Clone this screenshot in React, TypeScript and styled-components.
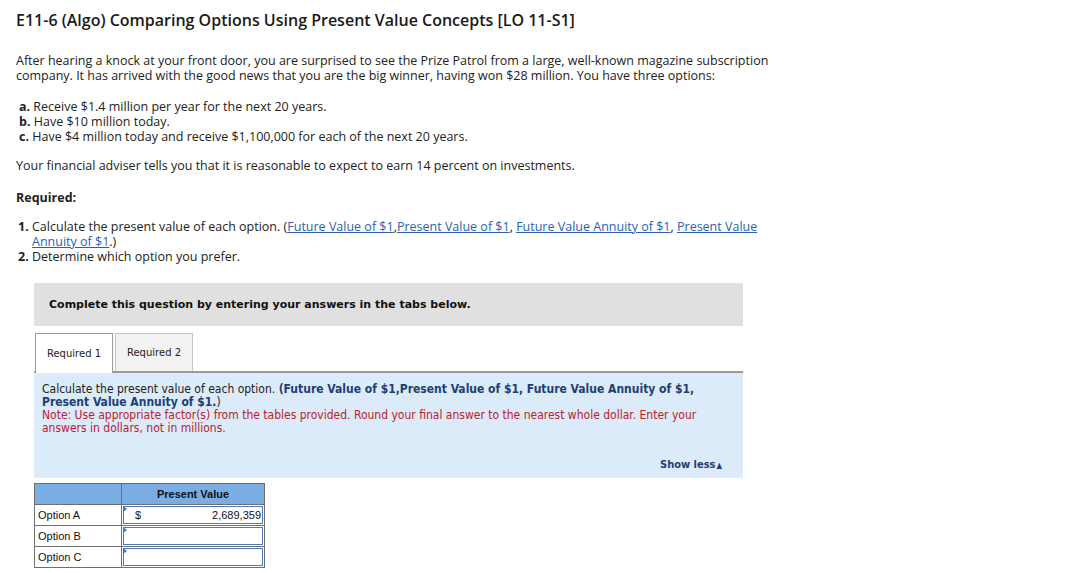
import React from 'react';
import styled, { createGlobalStyle } from 'styled-components';

const GlobalStyle = createGlobalStyle`
  body {
    margin: 0;
    background: #fff;
    color: #222;
    font-family: "Open Sans", "Liberation Sans", sans-serif;
  }
`;

const Page = styled.div`
  width: 1092px;
  padding: 10px 16px 0 16px;
  box-sizing: border-box;
`;

const Title = styled.h1`
  margin: 0;
  font-size: 16px;
  font-weight: 600;
  line-height: 20px;
  color: #1a1a1a;
`;

const Para = styled.p<{ $top?: number }>`
  margin: ${(p) => p.$top ?? 0}px 0 0 0;
  font-size: 12.5px;
  line-height: 14.5px;
  width: 755px;
`;

const OptionList = styled.ul`
  list-style: none;
  margin: 16px 0 0 0;
  padding: 0 0 0 3px;
  font-size: 12.5px;
  line-height: 15px;
`;

const Marker = styled.b`
  font-weight: 700;
`;

const Heading = styled.div`
  margin-top: 15px;
  font-size: 12.5px;
  font-weight: 700;
`;

const Numbered = styled.ol`
  margin: 13px 0 0 0;
  padding: 0 0 0 16px;
  font-size: 12.5px;
  line-height: 15px;
  width: 740px;
  li::marker {
    font-weight: 700;
  }
`;

const Item = styled.li`
  padding-left: 0;
`;

const Link = styled.a`
  color: #2a62b0;
  text-decoration: underline;
`;

const Question = styled.div`
  margin: 19px 0 0 18px;
  width: 709px;
`;

const Banner = styled.div`
  background: #e0e0e0;
  height: 43px;
  display: flex;
  align-items: center;
  padding-left: 15px;
  font-family: "DejaVu Sans", Verdana, sans-serif;
  font-size: 11px;
  font-weight: 700;
  color: #111;
`;

const TabBar = styled.div`
  margin-top: 7px;
  display: flex;
  gap: 2px;
  padding-left: 1px;
  border-bottom: 2px solid #9a9a9a;
  height: 38px;
`;

const Tab = styled.div<{ $active?: boolean }>`
  width: 78px;
  box-sizing: border-box;
  border: 1px solid ${(p) => (p.$active ? '#9a9a9a' : '#c4c4c4')};
  border-bottom: none;
  background: ${(p) => (p.$active ? '#fff' : '#f2f2f2')};
  height: ${(p) => (p.$active ? 40 : 38)}px;
  display: flex;
  align-items: center;
  justify-content: center;
  font-family: "DejaVu Sans", Verdana, sans-serif;
  font-size: 10px;
  color: #222;
`;

const Panel = styled.div`
  background: #dbebf9;
  padding: 10px 8px 6px 8px;
  font-family: "DejaVu Sans Condensed", "DejaVu Sans", sans-serif;
  font-size: 12px;
  line-height: 13px;
  color: #222;
`;

const Strong = styled.b`
  color: #1f3e74;
`;

const Note = styled.div`
  color: #c0202a;
`;

const ShowLess = styled.div`
  margin-top: 23px;
  text-align: right;
  padding-right: 13px;
  font-weight: 700;
  font-size: 11px;
  color: #1f3e74;
`;

const Arrow = styled.span`
  font-size: 8px;
  margin-left: 1px;
`;

const Table = styled.table`
  margin-top: 5px;
  border-collapse: collapse;
  font-family: "Liberation Sans", Arial, sans-serif;
  font-size: 11px;
  color: #111;
`;

const HeadCell = styled.th<{ $w: number }>`
  width: ${(p) => p.$w}px;
  height: 20px;
  background: #7aaee3;
  border: 1px solid #6f6f6f;
  font-weight: 700;
  padding: 0;
  text-align: center;
`;

const LabelCell = styled.td`
  height: 20px;
  border: 1px solid #6f6f6f;
  padding: 0 3px;
`;

const ValueCell = styled.td`
  border: 1px solid #6f6f6f;
  padding: 1px;
  height: 18px;
  position: relative;
`;

const Input = styled.div`
  box-sizing: border-box;
  height: 18px;
  border: 1px solid #4d79b4;
  display: flex;
  justify-content: space-between;
  align-items: center;
  padding: 0 1px 0 11px;
`;

const Flag = styled.span`
  position: absolute;
  top: 1px;
  left: 1px;
  width: 0;
  height: 0;
  border-top: 3px solid transparent;
  border-bottom: 3px solid transparent;
  border-left: 4px solid #3b78c8;
`;

const rows = [
  { label: 'Option A', value: '2,689,359' },
  { label: 'Option B', value: '' },
  { label: 'Option C', value: '' },
];

export default function App() {
  return (
    <Page>
      <GlobalStyle />
      <Title>E11-6 (Algo) Comparing Options Using Present Value Concepts [LO 11-S1]</Title>
      <Para $top={24}>
        After hearing a knock at your front door, you are surprised to see the Prize Patrol from a large, well-known magazine subscription company. It has arrived with the good news that you are the big winner, having won $28 million. You have three options:
      </Para>
      <OptionList>
        <li><Marker>a.</Marker> Receive $1.4 million per year for the next 20 years.</li>
        <li><Marker>b.</Marker> Have $10 million today.</li>
        <li><Marker>c.</Marker> Have $4 million today and receive $1,100,000 for each of the next 20 years.</li>
      </OptionList>
      <Para $top={15}>Your financial adviser tells you that it is reasonable to expect to earn 14 percent on investments.</Para>
      <Heading>Required:</Heading>
      <Numbered>
        <Item>
          Calculate the present value of each option. (<Link>Future Value of $1</Link>,<Link>Present Value of $1</Link>, <Link>Future Value Annuity of $1</Link>, <Link>Present Value Annuity of $1</Link>.)
        </Item>
        <Item>Determine which option you prefer.</Item>
      </Numbered>
      <Question>
        <Banner>Complete this question by entering your answers in the tabs below.</Banner>
        <TabBar>
          <Tab $active>Required 1</Tab>
          <Tab>Required 2</Tab>
        </TabBar>
        <Panel>
          Calculate the present value of each option. <Strong>(Future Value of $1,Present Value of $1, Future Value Annuity of $1, Present Value Annuity of $1.</Strong>)
          <Note>Note: Use appropriate factor(s) from the tables provided. Round your final answer to the nearest whole dollar. Enter your answers in dollars, not in millions.</Note>
          <ShowLess>Show less<Arrow>▲</Arrow></ShowLess>
        </Panel>
        <Table>
          <thead>
            <tr>
              <HeadCell $w={86} />
              <HeadCell $w={142}>Present Value</HeadCell>
            </tr>
          </thead>
          <tbody>
            {rows.map((r) => (
              <tr key={r.label}>
                <LabelCell>{r.label}</LabelCell>
                <ValueCell>
                  <Flag />
                  <Input>
                    {r.value ? <span>$</span> : null}
                    <span>{r.value}</span>
                  </Input>
                </ValueCell>
              </tr>
            ))}
          </tbody>
        </Table>
      </Question>
    </Page>
  );
}
